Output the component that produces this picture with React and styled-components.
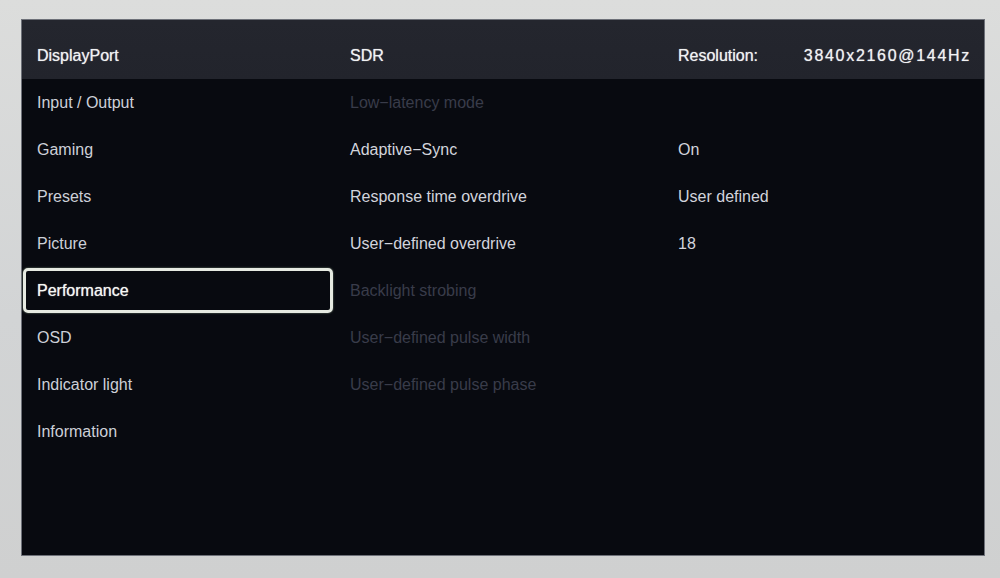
import React from 'react';
import styled, { createGlobalStyle } from 'styled-components';

const GlobalStyle = createGlobalStyle`
  html, body {
    margin: 0;
    padding: 0;
    width: 1000px;
    height: 578px;
    overflow: hidden;
  }
  body {
    background: linear-gradient(180deg, #dcdddc 0%, #d2d4d5 55%, #cfd0d0 100%);
    font-family: 'Liberation Sans', Arial, sans-serif;
  }
`;

const Page = styled.div`
  width: 1000px;
  height: 578px;
  padding: 20px 16px 23px 22px;
  box-sizing: border-box;
  display: flex;
`;

const Panel = styled.div`
  flex: 1;
  display: flex;
  flex-direction: column;
  background: #080a10;
  box-shadow: 0 0 0 1px #6d7078;
`;

const Columns = styled.div`
  display: grid;
  grid-template-columns: 328px 328px 1fr auto;
  padding-right: 13px;
`;

const Header = styled(Columns)`
  height: 59px;
  box-sizing: border-box;
  padding-top: 12px;
  align-items: center;
  background: linear-gradient(180deg, #24262e 0%, #22242c 100%);
`;

const HeaderText = styled.div`
  font-size: 16px;
  color: #f1f2f4;
  text-shadow: 0 0 1px rgba(255, 255, 255, 0.7);
  padding-left: ${p => (p.$first ? '15px' : '0')};
  letter-spacing: ${p => (p.$spaced ? '1.7px' : '0')};
  text-align: ${p => (p.$right ? 'right' : 'left')};
`;

const Body = styled(Columns)`
  grid-auto-rows: 47px;
  align-items: center;
`;

const MenuItem = styled.div`
  grid-column: 1;
  height: ${p => (p.$selected ? '45px' : 'auto')};
  margin: 0 17px 0 1px;
  display: flex;
  align-items: center;
  padding-left: 11px;
  box-sizing: border-box;
  font-size: 16px;
  color: ${p => (p.$selected ? '#f6f7f4' : '#cdd0d8')};
  text-shadow: ${p => (p.$selected ? '0 0 1px rgba(255,255,255,0.8)' : 'none')};
  border: ${p => (p.$selected ? '3px solid #e6eae2' : '3px solid transparent')};
  border-radius: 5px;
  box-shadow: ${p => (p.$selected ? '0 0 2px rgba(200, 230, 190, 0.6)' : 'none')};
`;

const Option = styled.div`
  grid-column: 2;
  font-size: 16px;
  color: ${p => (p.$disabled ? '#393c4a' : '#d2d4dc')};
`;

const Value = styled.div`
  grid-column: 3 / span 2;
  font-size: 16px;
  color: #d2d4dc;
`;

const menu = [
  'Input / Output',
  'Gaming',
  'Presets',
  'Picture',
  'Performance',
  'OSD',
  'Indicator light',
  'Information',
];

const options = [
  { label: 'Low-latency mode', disabled: true },
  { label: 'Adaptive-Sync', value: 'On' },
  { label: 'Response time overdrive', value: 'User defined' },
  { label: 'User-defined overdrive', value: '18' },
  { label: 'Backlight strobing', disabled: true },
  { label: 'User-defined pulse width', disabled: true },
  { label: 'User-defined pulse phase', disabled: true },
];

export default function App() {
  return (
    <>
      <GlobalStyle />
      <Page>
        <Panel>
          <Header>
            <HeaderText $first>DisplayPort</HeaderText>
            <HeaderText>SDR</HeaderText>
            <HeaderText>Resolution:</HeaderText>
            <HeaderText $spaced $right>3840x2160@144Hz</HeaderText>
          </Header>
          <Body>
            {menu.map((item, i) => (
              <React.Fragment key={item}>
                <MenuItem $selected={item === 'Performance'} style={{ gridRow: i + 1 }}>
                  {item}
                </MenuItem>
                {options[i] && (
                  <Option $disabled={options[i].disabled} style={{ gridRow: i + 1 }}>
                    {options[i].label.replace(/-/g, '\u2212')}
                  </Option>
                )}
                {options[i] && options[i].value && (
                  <Value style={{ gridRow: i + 1 }}>{options[i].value}</Value>
                )}
              </React.Fragment>
            ))}
          </Body>
        </Panel>
      </Page>
    </>
  );
}
